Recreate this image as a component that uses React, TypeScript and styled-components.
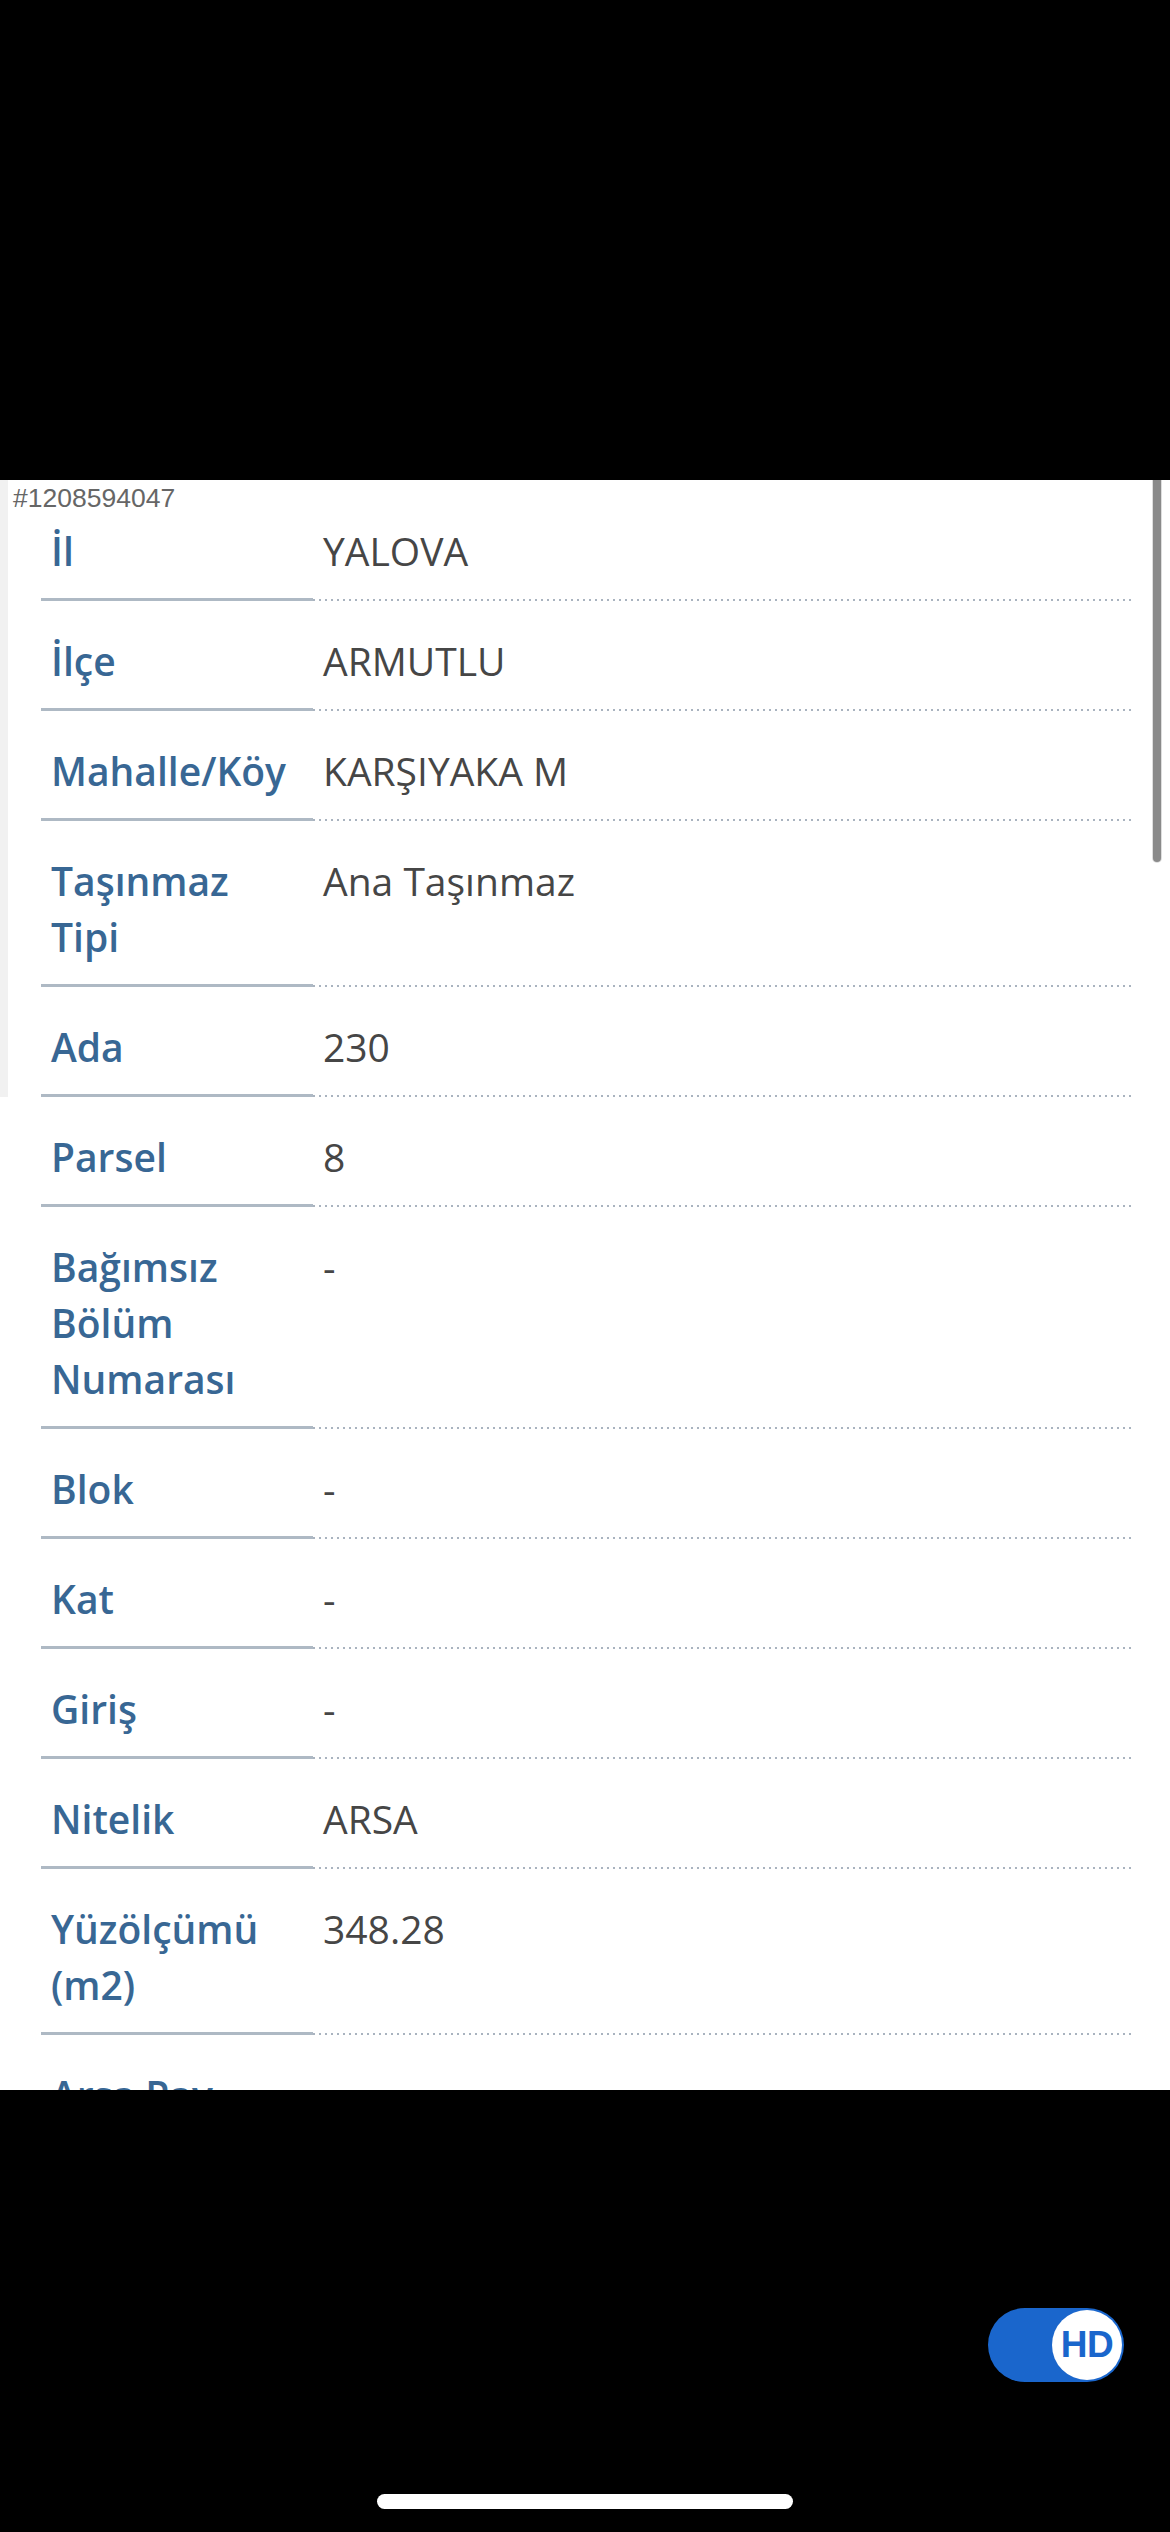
import React from "react";
import styled, { createGlobalStyle } from "styled-components";

const GlobalStyle = createGlobalStyle`
  html, body { margin: 0; padding: 0; background: #000; }
  body {
    width: 1170px;
    height: 2532px;
    overflow: hidden;
    font-family: "Open Sans", "Noto Sans", sans-serif;
  }
`;

const Screen = styled.div`
  width: 1170px;
  height: 2532px;
  display: flex;
  flex-direction: column;
  background: #000;
`;

const TopArea = styled.div`
  height: 480px;
  flex: none;
  background: #000;
`;

const Panel = styled.div`
  position: relative;
  height: 1610px;
  flex: none;
  background: #fff;
  overflow: hidden;
  display: flex;
  align-items: flex-start;
`;

const EdgeStrip = styled.div`
  width: 8px;
  height: 617px;
  flex: none;
  background: #f1f1f1;
`;

const ListingId = styled.div`
  position: absolute;
  top: 5px;
  left: 13px;
  font-family: "Liberation Sans", Arial, sans-serif;
  font-size: 26.5px;
  line-height: 26px;
  color: #666;
`;

const ScrollThumb = styled.div`
  position: absolute;
  top: 0;
  right: 9px;
  width: 8px;
  height: 382px;
  border-radius: 0 0 4px 4px;
  background: #8a8a8a;
  box-shadow: 0 0 0 1px rgba(200, 200, 200, 0.6);
`;

const Table = styled.div`
  flex: 1;
  padding: 11px 39px 0 33px;
  display: flex;
  flex-direction: column;
`;

const Row = styled.div`
  display: grid;
  grid-template-columns: 272px 1fr;
`;

const Label = styled.div`
  padding: 32px 20px 19px 10px;
  border-bottom: 3px solid #aeb9c4;
  font-weight: 600;
  font-size: 39px;
  line-height: 56px;
  color: #386794;
`;

const Value = styled.div`
  padding: 32px 0 19px 10px;
  font-weight: 400;
  font-size: 39px;
  line-height: 56px;
  color: #464646;
  background-image: linear-gradient(to right, #a9b3bf 0 2px, transparent 2px 6px);
  background-size: 6px 2px;
  background-repeat: repeat-x;
  background-position: left bottom 0.5px;
`;

const BottomArea = styled.div`
  flex: 1;
  display: flex;
  flex-direction: column;
  padding-top: 218px;
  background: #000;
`;

const HdToggle = styled.div`
  align-self: flex-end;
  margin-right: 46px;
  width: 136px;
  height: 74px;
  box-sizing: border-box;
  padding: 2px;
  border-radius: 37px;
  background: #1a66cc;
  display: flex;
  justify-content: flex-end;
  align-items: center;
`;

const HdKnob = styled.div`
  width: 70px;
  height: 70px;
  border-radius: 50%;
  background: #fff;
  display: flex;
  align-items: center;
  justify-content: center;
  font-family: "Liberation Sans", Arial, sans-serif;
  font-weight: 700;
  font-size: 37px;
  letter-spacing: -0.5px;
  color: #1a66cc;
`;

const HomeIndicator = styled.div`
  align-self: center;
  margin-top: 112px;
  width: 416px;
  height: 15px;
  border-radius: 8px;
  background: #fff;
`;

const rows: { label: string; value: string }[] = [
  { label: "İl", value: "YALOVA" },
  { label: "İlçe", value: "ARMUTLU" },
  { label: "Mahalle/Köy", value: "KARŞIYAKA M" },
  { label: "Taşınmaz Tipi", value: "Ana Taşınmaz" },
  { label: "Ada", value: "230" },
  { label: "Parsel", value: "8" },
  { label: "Bağımsız Bölüm Numarası", value: "-" },
  { label: "Blok", value: "-" },
  { label: "Kat", value: "-" },
  { label: "Giriş", value: "-" },
  { label: "Nitelik", value: "ARSA" },
  { label: "Yüzölçümü (m2)", value: "348.28" },
  { label: "Arsa Pay Payda", value: "" },
];

export default function App() {
  return (
    <>
      <GlobalStyle />
      <Screen>
        <TopArea />
        <Panel>
          <EdgeStrip />
          <Table>
            {rows.map((r) => (
              <Row key={r.label}>
                <Label>{r.label}</Label>
                <Value>{r.value}</Value>
              </Row>
            ))}
          </Table>
          <ListingId>#1208594047</ListingId>
          <ScrollThumb />
        </Panel>
        <BottomArea>
          <HdToggle>
            <HdKnob>HD</HdKnob>
          </HdToggle>
          <HomeIndicator />
        </BottomArea>
      </Screen>
    </>
  );
}
